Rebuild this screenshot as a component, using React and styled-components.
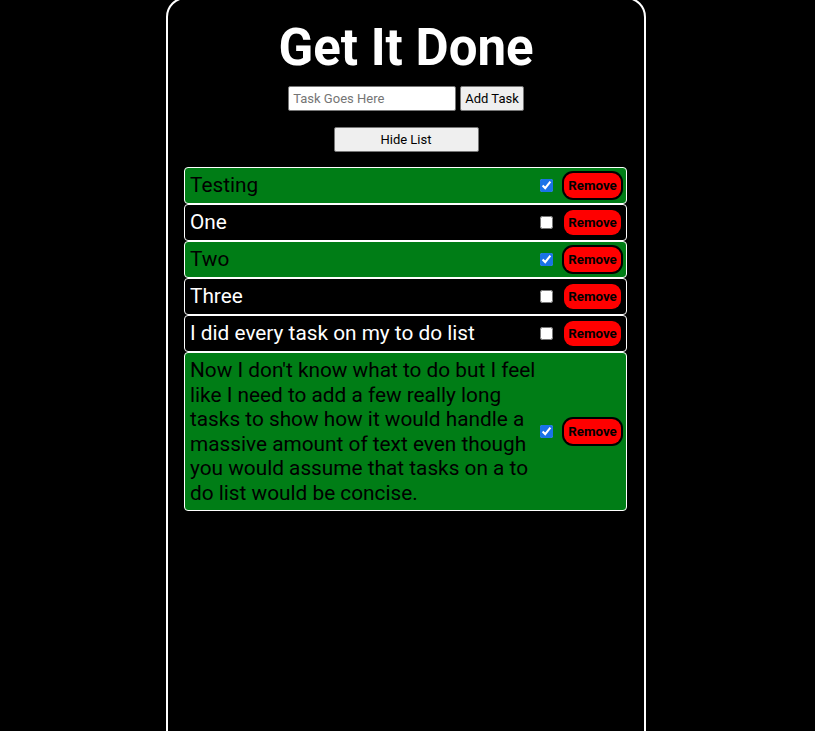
import React, { useState } from 'react';
import styled, { createGlobalStyle } from 'styled-components';

const GlobalStyle = createGlobalStyle`
  body {
    margin: 0;
    background-color: #000;
    font-family: Roboto, "Liberation Sans", sans-serif;
    overflow: hidden;
  }
`;

const Page = styled.div`
  display: flex;
  justify-content: center;
`;

const Card = styled.main`
  width: 476px;
  min-height: 780px;
  margin: -3px 3px 0 0;
  border: 2px solid #fff;
  border-radius: 20px;
  display: flex;
  flex-direction: column;
  align-items: center;
`;

const Title = styled.h1`
  margin: 19px 0 9px;
  font-size: 51px;
  font-weight: 700;
  color: #fff;
  line-height: normal;
`;

const Form = styled.form`
  display: flex;
  gap: 4px;
`;

const Input = styled.input`
  width: 168px;
  height: 25px;
  box-sizing: border-box;
  padding: 1px 4px;
  border: 1px solid #767676;
  border-radius: 2px;
  font-family: Roboto, sans-serif;
  font-size: 13px;

  &::placeholder {
    color: #757575;
  }
`;

const GreyButton = styled.button`
  height: 25px;
  width: ${(props) => props.$width || 'auto'};
  box-sizing: border-box;
  padding: 1px 4px;
  margin-top: ${(props) => props.$top || '0'};
  background-color: #efefef;
  border: 1px solid #767676;
  border-radius: 2px;
  color: #000;
  font-family: Roboto, sans-serif;
  font-size: 13px;
`;

const List = styled.ul`
  list-style: none;
  margin: 15px 0 0 -1px;
  padding: 0;
  width: 443px;
`;

const Row = styled.li`
  display: flex;
  align-items: center;
  padding: 5px;
  border: 1px solid #fff;
  border-radius: 4px;
  background-color: ${(props) => (props.$done ? 'rgb(0, 125, 22)' : '#000')};
  color: ${(props) => (props.$done ? '#000' : '#fff')};
`;

const TaskText = styled.span`
  flex: 1;
  font-size: 20.8px;
  line-height: 24.5px;
`;

const Check = styled.input`
  width: 13px;
  height: 13px;
  margin: 0 11px 0 4px;
  accent-color: #1a73e8;
`;

const RemoveButton = styled.button`
  width: 57px;
  height: 25px;
  padding: 0;
  border: none;
  border-radius: 9px;
  background-color: #ff0000;
  color: #000;
  font-family: Roboto, sans-serif;
  font-size: 13.33px;
  font-weight: 700;
  box-shadow: ${(props) => (props.$done ? '0 0 0 2px #000' : 'none')};
`;

const initialTasks = [
  { text: 'Testing', done: true },
  { text: 'One', done: false },
  { text: 'Two', done: true },
  { text: 'Three', done: false },
  { text: 'I did every task on my to do list', done: false },
  {
    text: "Now I don't know what to do but I feel like I need to add a few really long tasks to show how it would handle a massive amount of text even though you would assume that tasks on a to do list would be concise.",
    done: true,
  },
];

function App() {
  const [tasks, setTasks] = useState(initialTasks);
  const [showList, setShowList] = useState(true);

  const toggle = (index) => {
    setTasks(tasks.map((t, i) => (i === index ? { ...t, done: !t.done } : t)));
  };

  const remove = (index) => {
    setTasks(tasks.filter((t, i) => i !== index));
  };

  return (
    <>
      <GlobalStyle />
      <Page>
        <Card>
          <Title>Get It Done</Title>
          <Form onSubmit={(e) => e.preventDefault()}>
            <Input placeholder="Task Goes Here" />
            <GreyButton type="submit">Add Task</GreyButton>
          </Form>
          <GreyButton $width="145px" $top="16px" onClick={() => setShowList(!showList)}>
            {showList ? 'Hide List' : 'Show List'}
          </GreyButton>
          {showList && (
            <List>
              {tasks.map((task, index) => (
                <Row key={index} $done={task.done}>
                  <TaskText>{task.text}</TaskText>
                  <Check type="checkbox" checked={task.done} onChange={() => toggle(index)} />
                  <RemoveButton $done={task.done} onClick={() => remove(index)}>
                    Remove
                  </RemoveButton>
                </Row>
              ))}
            </List>
          )}
        </Card>
      </Page>
    </>
  );
}

export default App;
